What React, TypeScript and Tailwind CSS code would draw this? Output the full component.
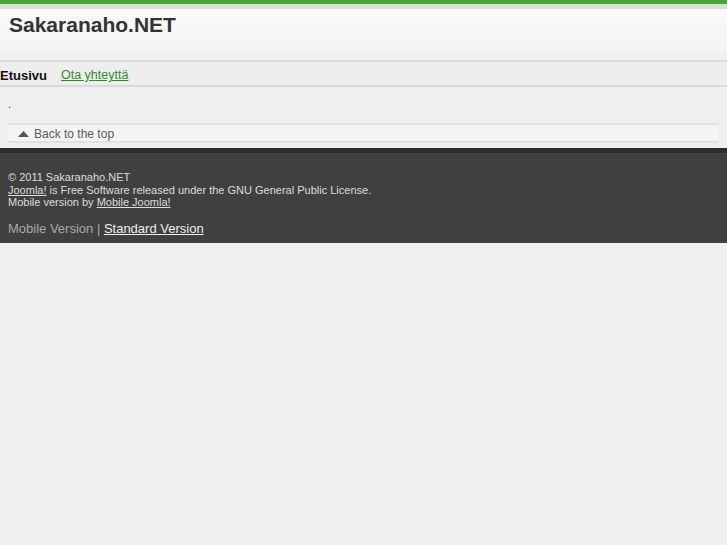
export default function App() {
  return (
    <div className="min-h-[545px] bg-[#efefef] font-['Liberation_Sans',Arial,sans-serif]">
      <div className="h-[4px] bg-[#46a838]" />
      <div className="h-[5px] bg-[#dcdcdc]" />
      <div className="h-[42px] bg-gradient-to-b from-[#fafafa] to-[#f3f3f3] px-[9px] pt-[4px]">
        <h1 className="text-[21px] font-bold leading-[24px] text-[#333]">Sakaranaho.NET</h1>
      </div>
      <div className="h-[9px] bg-[#f0f0f0]" />
      <div className="border-t-2 border-t-[#d9d9d9] border-b-2 border-b-[#d9d9d9] h-[27px] flex items-center gap-[14px] bg-[#eeeeee] pt-[4px]">
        <span className="text-[13px] font-bold text-[#111]">Etusivu</span>
        <a href="#" className="text-[12.5px] text-[#2b8f22] underline">Ota yhteyttä</a>
      </div>
      <div className="px-[8px] pt-[10px] text-[11px] leading-[14px] text-[#333]">.</div>
      <div className="mx-[8px] mt-[12px] mr-[9px] h-[20px] flex items-center gap-[5px] border-t-2 border-b-2 border-[#e2e2e2] bg-[#f4f4f4] pl-[10px] pt-[2px] text-[12px] text-[#5a5a5a]">
        <svg width="11" height="6" viewBox="0 0 11 6"><path d="M0 6 L5.5 0 L11 6 Z" fill="#555" /></svg>
        <span>Back to the top</span>
      </div>
      <div className="mt-[5px] h-[5px] bg-[#2c2c2c]" />
      <div className="bg-[#404040] px-[8px] pt-[18px] pb-[5px] text-[11px] leading-[12.6px] text-[#dddddd]">
        <div>© 2011 Sakaranaho.NET</div>
        <div><a href="#" className="underline">Joomla!</a> is Free Software released under the GNU General Public License.</div>
        <div>Mobile version by <a href="#" className="underline">Mobile Joomla!</a></div>
        <div className="mt-[11px] text-[13px] leading-[18px] text-[#aaaaaa]">
          Mobile Version | <a href="#" className="underline text-[#eeeeee]">Standard Version</a>
        </div>
      </div>
    </div>
  );
}
